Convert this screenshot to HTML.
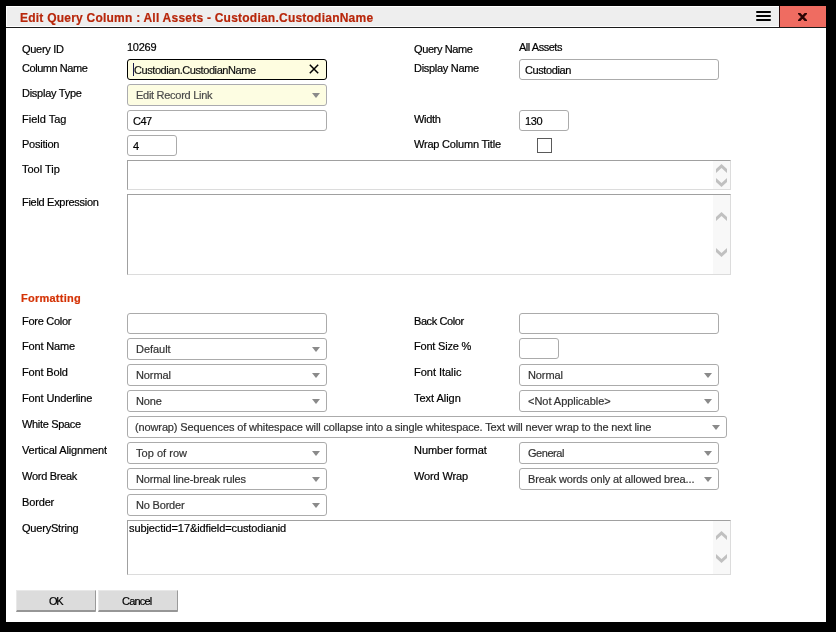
<!DOCTYPE html>
<html><head><meta charset="utf-8">
<style>
html,body{margin:0;padding:0;}
body{width:836px;height:632px;background:#000;position:relative;overflow:hidden;font-family:"Liberation Sans",sans-serif;}
#dlg{position:absolute;left:6px;top:6px;width:820px;height:616px;background:#fff;}
#tbar{position:absolute;left:6px;top:6px;width:773px;height:21px;background:#eeeeee;border-top:0;}
#tbar:before{content:"";position:absolute;left:0;top:0;width:773px;height:1px;background:#fff;}
#tbar:after{content:"";position:absolute;left:0;top:0;width:1px;height:21px;background:#fff;}
#tline{position:absolute;left:6px;top:26px;width:773px;height:1px;background:#fff;}
#tdark{position:absolute;left:6px;top:27px;width:820px;height:1px;background:#1a1a1a;}
#close{position:absolute;left:780px;top:6px;width:46px;height:21px;background:#ef6c61;}
#csep{position:absolute;left:779px;top:6px;width:1px;height:21px;background:#2a0a0a;}
.t{position:absolute;font-size:11px;line-height:13px;color:#000;white-space:pre;}
.v{position:absolute;font-size:11px;line-height:13px;color:#333;white-space:pre;}
.title{position:absolute;left:20px;top:11px;font-size:12px;line-height:14px;font-weight:bold;color:#b8260a;white-space:pre;}
.fmt{position:absolute;left:21px;top:292px;font-size:11px;line-height:13px;font-weight:bold;color:#d43306;white-space:pre;}
.inp{position:absolute;box-sizing:border-box;border:1px solid #ababab;border-radius:3px;background:#fff;}
.sel{position:absolute;box-sizing:border-box;border:1px solid #ababab;border-radius:3px;background:#fff;}
.sel:after{content:"";position:absolute;right:6px;top:8px;width:0;height:0;border-left:4px solid transparent;border-right:4px solid transparent;border-top:5px solid #8a8a8a;}
.ta{position:absolute;box-sizing:border-box;border-top:1px solid #a0a0a0;border-left:1px solid #a0a0a0;border-right:1px solid #dcdcdc;border-bottom:1px solid #dcdcdc;background:#fff;}
.sb{position:absolute;right:0;top:0;bottom:0;width:17px;background:#f8f8f8;}
.btn{position:absolute;box-sizing:border-box;background:#dcdcdc;border-top:1px solid #e8e8e8;border-left:1px solid #e8e8e8;border-right:1px solid #9a9a9a;border-bottom:2px solid #969696;border-bottom-right-radius:1px;}
.t,.v,.title,.fmt{will-change:transform;}
.t,.v,.title,.fmt{-webkit-text-stroke:0.2px currentColor;}
</style></head><body>
<div id="dlg"></div>
<div id="tbar"></div>
<div id="tline"></div>
<div id="tdark"></div>
<div id="csep"></div>
<div id="close"></div>
<!-- hamburger -->
<div style="position:absolute;left:756px;top:11px;width:15px;height:2px;background:#000;border-radius:1px"></div>
<div style="position:absolute;left:756px;top:15px;width:15px;height:2px;background:#000;border-radius:1px"></div>
<div style="position:absolute;left:756px;top:19px;width:15px;height:2px;background:#000;border-radius:1px"></div>
<!-- close x -->
<svg style="position:absolute;left:798px;top:13px" width="9" height="8" viewBox="0 0 9 8"><path d="M0.2 -0.5 L8.8 8.5 M8.8 -0.5 L0.2 8.5" stroke="#2a0505" stroke-width="2.5"/></svg>
<div class="title" style="letter-spacing:0.229px;">Edit Query Column : All Assets - Custodian.CustodianName</div>

<!-- left labels -->
<div class="t" style="letter-spacing:-0.286px;left:22px;top:43px">Query ID</div>
<div class="t" style="letter-spacing:-0.450px;left:22px;top:62px">Column Name</div>
<div class="t" style="letter-spacing:-0.264px;left:22px;top:87px">Display Type</div>
<div class="t" style="letter-spacing:0.000px;left:22px;top:113px">Field Tag</div>
<div class="t" style="letter-spacing:-0.250px;left:22px;top:138px">Position</div>
<div class="t" style="letter-spacing:0.000px;left:22px;top:163px">Tool Tip</div>
<div class="t" style="letter-spacing:-0.300px;left:22px;top:196px">Field Expression</div>
<div class="fmt" style="letter-spacing:0.244px;">Formatting</div>
<div class="t" style="letter-spacing:-0.278px;left:22px;top:315px">Fore Color</div>
<div class="t" style="letter-spacing:-0.156px;left:22px;top:340px">Font Name</div>
<div class="t" style="letter-spacing:-0.156px;left:22px;top:366px">Font Bold</div>
<div class="t" style="letter-spacing:-0.135px;left:22px;top:392px">Font Underline</div>
<div class="t" style="letter-spacing:-0.325px;left:22px;top:418px">White Space</div>
<div class="t" style="letter-spacing:-0.147px;left:22px;top:444px">Vertical Alignment</div>
<div class="t" style="letter-spacing:-0.278px;left:22px;top:470px">Word Break</div>
<div class="t" style="letter-spacing:-0.150px;left:22px;top:496px">Border</div>
<div class="t" style="letter-spacing:-0.200px;left:22px;top:522px">QueryString</div>

<!-- right labels -->
<div class="t" style="letter-spacing:-0.389px;left:414px;top:43px">Query Name</div>
<div class="t" style="letter-spacing:-0.295px;left:414px;top:62px">Display Name</div>
<div class="t" style="letter-spacing:-0.312px;left:414px;top:113px">Width</div>
<div class="t" style="letter-spacing:-0.203px;left:414px;top:138px">Wrap Column Title</div>
<div class="t" style="letter-spacing:-0.417px;left:414px;top:315px">Back Color</div>
<div class="t" style="letter-spacing:-0.200px;left:414px;top:340px">Font Size %</div>
<div class="t" style="letter-spacing:-0.025px;left:414px;top:366px">Font Italic</div>
<div class="t" style="letter-spacing:-0.028px;left:414px;top:392px">Text Align</div>
<div class="t" style="letter-spacing:-0.050px;left:414px;top:444px">Number format</div>
<div class="t" style="letter-spacing:-0.125px;left:414px;top:470px">Word Wrap</div>

<!-- values -->
<div class="t" style="letter-spacing:-0.250px;left:127px;top:41px">10269</div>
<div class="t" style="letter-spacing:-0.472px;left:519px;top:41px">All Assets</div>

<div class="inp" style="left:127px;top:59px;width:200px;height:21px;border-color:#000;background:#fefde0"></div>
<div style="position:absolute;left:133px;top:63px;width:1px;height:13px;background:#1a1a4a"></div>
<div class="t" style="letter-spacing:-0.427px;left:134px;top:64px;color:#111">Custodian.CustodianName</div>
<svg style="position:absolute;left:308px;top:63px" width="12" height="12" viewBox="0 0 12 12"><path d="M1.8 1.8 L10.2 10.2 M10.2 1.8 L1.8 10.2" stroke="#000" stroke-width="1.5"/></svg>

<div class="inp" style="left:519px;top:59px;width:200px;height:21px"></div>
<div class="t" style="letter-spacing:-0.406px;left:525px;top:64px">Custodian</div>

<div class="sel" style="left:127px;top:84px;width:200px;height:22px;background:#fdfde2;border-color:#ababaf"></div>
<div class="v" style="letter-spacing:-0.280px;left:136px;top:89px;color:#4a4a4a">Edit Record Link</div>

<div class="inp" style="left:127px;top:110px;width:200px;height:21px"></div>
<div class="t" style="letter-spacing:-0.500px;left:133px;top:115px">C47</div>
<div class="inp" style="left:519px;top:110px;width:50px;height:21px"></div>
<div class="t" style="letter-spacing:-0.375px;left:525px;top:115px">130</div>

<div class="inp" style="left:127px;top:135px;width:50px;height:21px"></div>
<div class="t" style="left:133px;top:140px">4</div>
<div style="position:absolute;left:537px;top:138px;width:13px;height:13px;border:1px solid #5a5a5a;background:#fff"></div>

<div class="ta" style="left:127px;top:160px;width:604px;height:30px"><div class="sb"></div></div>
<svg style="position:absolute;left:716px;top:164px" width="11" height="9" viewBox="0 0 11 9"><polygon points="0,5 5.5,0 11,5 11,9 5.5,4 0,9" fill="#c0c0c0"/></svg>
<svg style="position:absolute;left:716px;top:178px" width="11" height="9" viewBox="0 0 11 9"><polygon points="0,0 5.5,5 11,0 11,4 5.5,9 0,4" fill="#c0c0c0"/></svg>
<div class="ta" style="left:127px;top:194px;width:604px;height:81px"><div class="sb"></div></div>
<svg style="position:absolute;left:716px;top:212px" width="11" height="9" viewBox="0 0 11 9"><polygon points="0,5 5.5,0 11,5 11,9 5.5,4 0,9" fill="#c0c0c0"/></svg>
<svg style="position:absolute;left:716px;top:248px" width="11" height="9" viewBox="0 0 11 9"><polygon points="0,0 5.5,5 11,0 11,4 5.5,9 0,4" fill="#c0c0c0"/></svg>

<div class="inp" style="left:127px;top:313px;width:200px;height:21px"></div>
<div class="inp" style="left:519px;top:313px;width:200px;height:21px"></div>

<div class="sel" style="left:127px;top:338px;width:200px;height:22px"></div>
<div class="v" style="letter-spacing:-0.042px;left:136px;top:343px">Default</div>
<div class="inp" style="left:519px;top:338px;width:40px;height:21px"></div>

<div class="sel" style="left:127px;top:364px;width:200px;height:22px"></div>
<div class="v" style="letter-spacing:-0.100px;left:136px;top:369px">Normal</div>
<div class="sel" style="left:519px;top:364px;width:200px;height:22px"></div>
<div class="v" style="letter-spacing:-0.100px;left:528px;top:369px">Normal</div>

<div class="sel" style="left:127px;top:390px;width:200px;height:22px"></div>
<div class="v" style="letter-spacing:-0.167px;left:136px;top:395px">None</div>
<div class="sel" style="left:519px;top:390px;width:200px;height:22px"></div>
<div class="v" style="letter-spacing:-0.033px;left:528px;top:395px">&lt;Not Applicable&gt;</div>

<div class="sel" style="left:127px;top:416px;width:600px;height:22px"></div>
<div class="v" style="letter-spacing:-0.125px;left:135px;top:421px">(nowrap) Sequences of whitespace will collapse into a single whitespace. Text will never wrap to the next line</div>

<div class="sel" style="left:127px;top:442px;width:200px;height:22px"></div>
<div class="v" style="letter-spacing:0.028px;left:136px;top:447px">Top of row</div>
<div class="sel" style="left:519px;top:442px;width:200px;height:22px"></div>
<div class="v" style="letter-spacing:-0.458px;left:528px;top:447px">General</div>

<div class="sel" style="left:127px;top:468px;width:200px;height:22px"></div>
<div class="v" style="letter-spacing:-0.170px;left:136px;top:473px">Normal line-break rules</div>
<div class="sel" style="left:519px;top:468px;width:200px;height:22px"></div>
<div class="v" style="letter-spacing:-0.140px;left:528px;top:473px">Break words only at allowed brea...</div>

<div class="sel" style="left:127px;top:494px;width:200px;height:22px"></div>
<div class="v" style="letter-spacing:-0.188px;left:136px;top:499px">No Border</div>

<div class="ta" style="left:127px;top:520px;width:604px;height:55px"><div class="sb"></div></div>
<svg style="position:absolute;left:716px;top:531px" width="11" height="9" viewBox="0 0 11 9"><polygon points="0,5 5.5,0 11,5 11,9 5.5,4 0,9" fill="#c0c0c0"/></svg>
<svg style="position:absolute;left:716px;top:554px" width="11" height="9" viewBox="0 0 11 9"><polygon points="0,0 5.5,5 11,0 11,4 5.5,9 0,4" fill="#c0c0c0"/></svg>
<div class="t" style="letter-spacing:-0.097px;left:129px;top:522px">subjectid=17&amp;idfield=custodianid</div>

<div class="btn" style="left:16px;top:590px;width:80px;height:22px"></div>
<div class="t" style="letter-spacing:-1.200px;left:49px;top:595px">OK</div>
<div class="btn" style="left:98px;top:590px;width:80px;height:22px"></div>
<div class="t" style="letter-spacing:-0.800px;left:122px;top:595px">Cancel</div>
</body></html>
